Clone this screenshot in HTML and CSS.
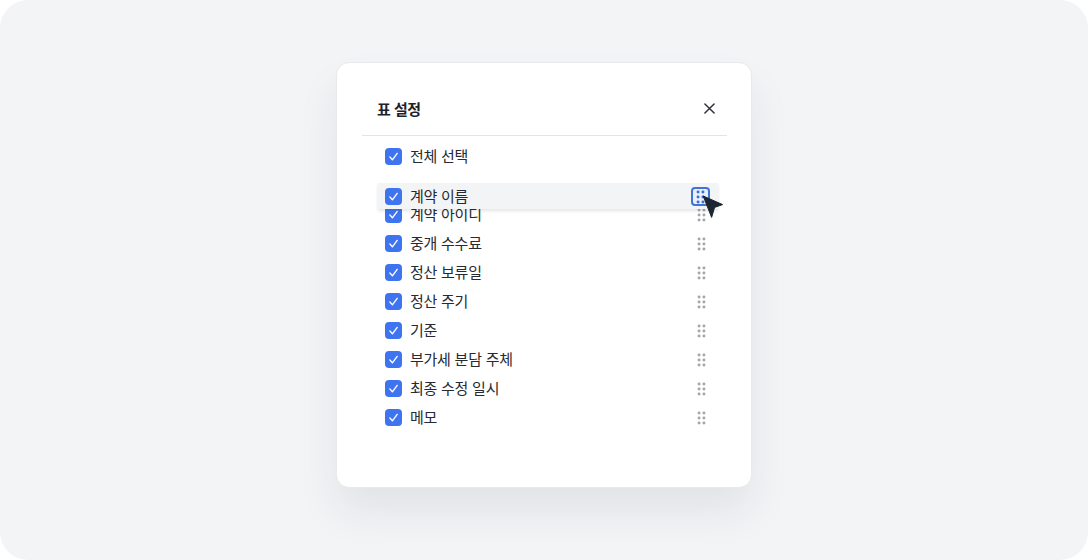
FILE: index.html
```html
<!DOCTYPE html>
<html lang="ko">
<head>
<meta charset="utf-8">
<title>표 설정</title>
<link rel="stylesheet" href="styles.css">
</head>
<body>
<svg class="defs" width="0" height="0" aria-hidden="true">
  <symbol id="check" viewBox="0 0 17 17"><path d="M4.8 8.9 7.4 11.8 12.2 5.4" fill="none" stroke="#fff" stroke-width="1.4" stroke-linecap="round" stroke-linejoin="round"/></symbol>
  <symbol id="grip" viewBox="0 0 10 16">
    <g fill="currentColor"><circle cx="2.2" cy="2.2" r="1.7"/><circle cx="7.8" cy="2.2" r="1.7"/><circle cx="2.2" cy="8" r="1.7"/><circle cx="7.8" cy="8" r="1.7"/><circle cx="2.2" cy="13.8" r="1.7"/><circle cx="7.8" cy="13.8" r="1.7"/></g>
  </symbol>
</svg>
<main class="stage">
  <section class="modal">
    <header class="modal-head">
      <h1 class="modal-title">표 설정</h1>
      <svg class="close" width="11" height="11" viewBox="0 0 12 12"><path d="M1 1 11 11M11 1 1 11" stroke="#2b303a" stroke-width="1.6" stroke-linecap="round"/></svg>
    </header>
    <div class="list">
      <div class="row all"><span class="box"><svg width="17" height="17"><use href="#check"/></svg></span><span class="label">전체 선택</span></div>
      <div class="row"><span class="box"><svg width="17" height="17"><use href="#check"/></svg></span><span class="label">계약 아이디</span><svg class="grip"><use href="#grip"/></svg></div>
      <div class="row"><span class="box"><svg width="17" height="17"><use href="#check"/></svg></span><span class="label">중개 수수료</span><svg class="grip"><use href="#grip"/></svg></div>
      <div class="row"><span class="box"><svg width="17" height="17"><use href="#check"/></svg></span><span class="label">정산 보류일</span><svg class="grip"><use href="#grip"/></svg></div>
      <div class="row"><span class="box"><svg width="17" height="17"><use href="#check"/></svg></span><span class="label">정산 주기</span><svg class="grip"><use href="#grip"/></svg></div>
      <div class="row"><span class="box"><svg width="17" height="17"><use href="#check"/></svg></span><span class="label">기준</span><svg class="grip"><use href="#grip"/></svg></div>
      <div class="row"><span class="box"><svg width="17" height="17"><use href="#check"/></svg></span><span class="label">부가세 분담 주체</span><svg class="grip"><use href="#grip"/></svg></div>
      <div class="row"><span class="box"><svg width="17" height="17"><use href="#check"/></svg></span><span class="label">최종 수정 일시</span><svg class="grip"><use href="#grip"/></svg></div>
      <div class="row"><span class="box"><svg width="17" height="17"><use href="#check"/></svg></span><span class="label">메모</span><svg class="grip"><use href="#grip"/></svg></div>
      <div class="row dragged"><span class="box"><svg width="17" height="17"><use href="#check"/></svg></span><span class="label">계약 이름</span><span class="grip-active"><svg class="grip-blue"><use href="#grip"/></svg></span></div>
      <svg class="cursor" width="22" height="24" viewBox="0 0 22 24"><path d="M1.2 1 20.6 9.6 12.6 12.4 9.6 22.4Z" fill="#1c2533" stroke="#1c2533" stroke-width="1" stroke-linejoin="round"/></svg>
    </div>
  </section>
</main>
</body>
</html>
```
FILE: styles.css
```css
* { box-sizing: border-box; }
html, body { margin: 0; height: 100%; }
body {
  background: #fff;
  font-family: "Noto Sans CJK KR", "Noto Sans", sans-serif;
  color: #20242c;
  overflow: hidden;
}
.defs { position: absolute; }
.stage {
  width: 1088px;
  height: 560px;
  background: #f3f4f6;
  border-radius: 28px;
  display: flex;
  justify-content: center;
  padding-top: 62px;
}
.modal {
  width: 416px;
  height: 426px;
  background: #fff;
  border: 1px solid #e8e9ec;
  border-radius: 13px;
  padding: 0 24px 0 25px;
  box-shadow: 0 24px 40px rgba(30, 40, 50, 0.08);
}
.modal-head {
  height: 73px;
  padding: 19px 12px 0 15px;
  display: flex;
  align-items: center;
  justify-content: space-between;
  border-bottom: 1px solid #e3e4e7;
}
.modal-title {
  margin: 0;
  font-size: 15px;
  line-height: 20px;
  font-weight: 700;
  letter-spacing: -0.5px;
  color: #1e222a;
}
.close { display: block; }
.list {
  position: relative;
  padding: 5px 0 0 23px;
}
.row {
  display: flex;
  align-items: center;
  height: 29px;
  padding-right: 21px;
}
.row.all { margin-bottom: 29px; }
.box {
  flex: none;
  width: 17px;
  height: 17px;
  margin-top: 2px;
  border-radius: 4px;
  background: #3f74f0;
  display: flex;
}
.label {
  margin-left: 8px;
  flex: 1;
  font-size: 15px;
  line-height: 20px;
  letter-spacing: -0.25px;
  color: #262a32;
}
.grip {
  flex: none;
  width: 9px;
  height: 14px;
  margin-top: 2px;
  color: #a4a6ab;
}
.dragged {
  position: absolute;
  left: 16px;
  top: 47px;
  width: 340px;
  height: 26px;
  padding: 0 0 0 7px;
  background: #f3f4f6;
  box-shadow: 0 2px 3px rgba(30, 40, 50, 0.12);
}
.dragged .box { margin-top: 0; }
.grip-active {
  flex: none;
  width: 19px;
  height: 19px;
  margin: 1px 8px 0 0;
  border: 2px solid #3f74d8;
  border-radius: 4px;
  background: #eaf0fb;
  display: flex;
  align-items: center;
  justify-content: center;
}
.grip-blue {
  width: 9px;
  height: 14px;
  color: #3f6fc8;
}
.cursor {
  position: absolute;
  left: 340px;
  top: 59px;
}
```
